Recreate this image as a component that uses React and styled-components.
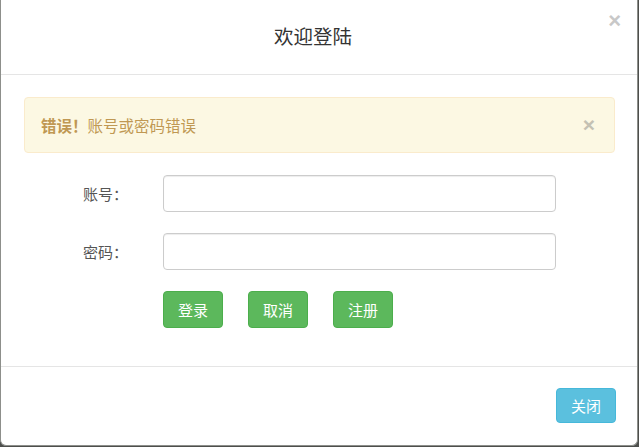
import React, { useState } from "react";
import styled, { createGlobalStyle } from "styled-components";

const GlobalStyle = createGlobalStyle`
  html, body {
    margin: 0;
    padding: 0;
    background: #4d4f4c;
  }
  body {
    font-family: "Liberation Sans", "Noto Sans CJK SC", sans-serif;
    font-size: 15px;
    color: #333;
  }
  * { box-sizing: border-box; }
`;

function App() {
  const [id, setId] = useState("");
  const [pwd, setPwd] = useState("");
  const [showAlert, setShowAlert] = useState(true);

  return (
    <>
      <GlobalStyle />
      <Modal>
        <Header>
          <Title>欢迎登陆</Title>
          <CloseX aria-label="close">×</CloseX>
        </Header>

        <Body>
          {showAlert && (
            <Alert>
              <span>
                <strong>错误！</strong>账号或密码错误
              </span>
              <AlertClose onClick={() => setShowAlert(false)}>×</AlertClose>
            </Alert>
          )}

          {/* 登录表单 */}
          <Form>
            <Label>账号：</Label>
            <Input type="text" value={id} onChange={(e) => setId(e.target.value)} />
            <Label>密码：</Label>
            <Input type="password" value={pwd} onChange={(e) => setPwd(e.target.value)} />
            <span />
            <Buttons>
              <GreenButton>登录</GreenButton>
              <GreenButton>取消</GreenButton>
              <GreenButton>注册</GreenButton>
            </Buttons>
          </Form>
        </Body>

        <Footer>
          <InfoButton>关闭</InfoButton>
        </Footer>
      </Modal>
    </>
  );
}

const Modal = styled.div`
  width: 638px;
  height: 446px;
  background: #fff;
  border: 1px solid #8d8f8b;
  border-top: none;
  border-radius: 0 0 6px 6px;
  display: flex;
  flex-direction: column;
  overflow: hidden;
`;

const Header = styled.div`
  position: relative;
  height: 75px;
  border-bottom: 1px solid #e5e5e5;
  display: flex;
  align-items: center;
  justify-content: center;
  padding: 0 12px 3px 0;
`;

const Title = styled.h4`
  margin: 0;
  font-family: "Noto Sans CJK SC", sans-serif;
  font-weight: 400;
  font-size: 19.5px;
  line-height: 26px;
  color: #333;
`;

const CloseX = styled.button`
  position: absolute;
  top: 8px;
  right: 16px;
  border: none;
  background: none;
  padding: 0;
  font-family: "Liberation Sans", sans-serif;
  font-size: 22px;
  font-weight: 700;
  line-height: 26px;
  color: #c8c8c8;
  cursor: pointer;
`;

const Body = styled.div`
  flex: 1;
  padding: 22px 22px 0 22px;
  border-bottom: 1px solid #e5e5e5;
`;

const Alert = styled.div`
  height: 56px;
  display: flex;
  align-items: center;
  justify-content: space-between;
  padding: 0 16px;
  margin-left: 1px;
  background: #fcf8e3;
  border: 1px solid #faebcc;
  border-radius: 4px;
  margin-bottom: 22px;
  color: #c09853;
  font-family: "Noto Sans CJK SC", sans-serif;
  font-size: 15.5px;

  strong {
    font-weight: 700;
  }
`;

const AlertClose = styled.button`
  border: none;
  background: none;
  padding: 0;
  margin-right: 3px;
  font-family: "Liberation Sans", sans-serif;
  font-size: 21px;
  font-weight: 700;
  color: #c4c1b3;
  cursor: pointer;
`;

const Form = styled.div`
  display: grid;
  grid-template-columns: 105px 393px;
  column-gap: 35px;
  row-gap: 21px;
  align-items: center;
`;

const Label = styled.label`
  text-align: right;
  font-family: "Noto Sans CJK SC", sans-serif;
  font-size: 15px;
  color: #555;
`;

const Input = styled.input`
  height: 37px;
  width: 100%;
  border: 1px solid #ccc;
  border-radius: 4px;
  padding: 6px 12px;
  font-size: 15px;
  outline: none;
  box-shadow: inset 0 1px 1px rgba(0, 0, 0, 0.075);
`;

const Buttons = styled.div`
  display: flex;
  gap: 25px;
`;

const GreenButton = styled.button`
  width: 60px;
  height: 37px;
  border: 1px solid #4cae4c;
  border-radius: 4px;
  background: #5cb85c;
  color: #fff;
  font-family: "Noto Sans CJK SC", sans-serif;
  font-size: 15px;
  cursor: pointer;
`;

const Footer = styled.div`
  display: flex;
  justify-content: flex-end;
  padding: 21px 21px 22px;
`;

const InfoButton = styled.button`
  width: 60px;
  height: 35px;
  border: 1px solid #46b8da;
  border-radius: 4px;
  background: #5bc0de;
  color: #fff;
  font-family: "Noto Sans CJK SC", sans-serif;
  font-size: 15px;
  cursor: pointer;
`;

export default App;
